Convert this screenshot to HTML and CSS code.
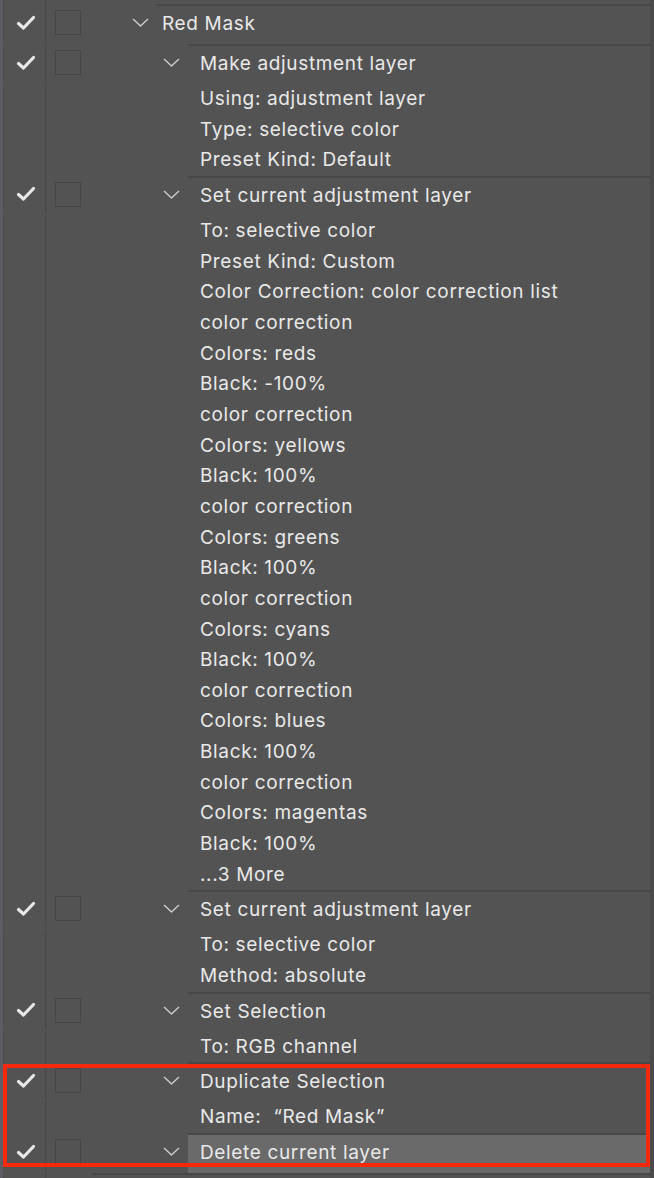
FILE: index.html
```html
<!DOCTYPE html>
<html>
<head>
<meta charset="utf-8">
<link rel="stylesheet" href="styles.css">
</head>
<body>
<div class="panel">
  <div class="row spacer"><div class="gut"></div></div>

  <div class="row head lvl1">
    <div class="gut"><svg class="check" viewBox="0 0 20 16"><polyline points="2.5,8.5 7.5,13 17.5,2.5"/></svg></div>
    <div class="tog"><span class="box"></span></div>
    <div class="twist"><svg class="chev" viewBox="0 0 18 10"><polyline points="1,1.5 9,9 17,1.5"/></svg></div>
    <div class="label">Red Mask</div>
  </div>

  <div class="row head lvl2">
    <div class="gut"><svg class="check" viewBox="0 0 20 16"><polyline points="2.5,8.5 7.5,13 17.5,2.5"/></svg></div>
    <div class="tog"><span class="box"></span></div>
    <div class="twist"><svg class="chev" viewBox="0 0 18 10"><polyline points="1,1.5 9,9 17,1.5"/></svg></div>
    <div class="label">Make adjustment layer</div>
  </div>
  <div class="row detail"><div class="gut"></div><div class="indent"></div><div class="label">Using: adjustment layer</div></div>
  <div class="row detail"><div class="gut"></div><div class="indent"></div><div class="label">Type: selective color</div></div>
  <div class="row detail"><div class="gut"></div><div class="indent"></div><div class="label">Preset Kind: Default</div></div>

  <div class="row head lvl2">
    <div class="gut"><svg class="check" viewBox="0 0 20 16"><polyline points="2.5,8.5 7.5,13 17.5,2.5"/></svg></div>
    <div class="tog"><span class="box"></span></div>
    <div class="twist"><svg class="chev" viewBox="0 0 18 10"><polyline points="1,1.5 9,9 17,1.5"/></svg></div>
    <div class="label">Set current adjustment layer</div>
  </div>
  <div class="row detail"><div class="gut"></div><div class="indent"></div><div class="label">To: selective color</div></div>
  <div class="row detail"><div class="gut"></div><div class="indent"></div><div class="label">Preset Kind: Custom</div></div>
  <div class="row detail"><div class="gut"></div><div class="indent"></div><div class="label">Color Correction: color correction list</div></div>
  <div class="row detail"><div class="gut"></div><div class="indent"></div><div class="label">color correction</div></div>
  <div class="row detail"><div class="gut"></div><div class="indent"></div><div class="label">Colors: reds</div></div>
  <div class="row detail"><div class="gut"></div><div class="indent"></div><div class="label">Black: -100%</div></div>
  <div class="row detail"><div class="gut"></div><div class="indent"></div><div class="label">color correction</div></div>
  <div class="row detail"><div class="gut"></div><div class="indent"></div><div class="label">Colors: yellows</div></div>
  <div class="row detail"><div class="gut"></div><div class="indent"></div><div class="label">Black: 100%</div></div>
  <div class="row detail"><div class="gut"></div><div class="indent"></div><div class="label">color correction</div></div>
  <div class="row detail"><div class="gut"></div><div class="indent"></div><div class="label">Colors: greens</div></div>
  <div class="row detail"><div class="gut"></div><div class="indent"></div><div class="label">Black: 100%</div></div>
  <div class="row detail"><div class="gut"></div><div class="indent"></div><div class="label">color correction</div></div>
  <div class="row detail"><div class="gut"></div><div class="indent"></div><div class="label">Colors: cyans</div></div>
  <div class="row detail"><div class="gut"></div><div class="indent"></div><div class="label">Black: 100%</div></div>
  <div class="row detail"><div class="gut"></div><div class="indent"></div><div class="label">color correction</div></div>
  <div class="row detail"><div class="gut"></div><div class="indent"></div><div class="label">Colors: blues</div></div>
  <div class="row detail"><div class="gut"></div><div class="indent"></div><div class="label">Black: 100%</div></div>
  <div class="row detail"><div class="gut"></div><div class="indent"></div><div class="label">color correction</div></div>
  <div class="row detail"><div class="gut"></div><div class="indent"></div><div class="label">Colors: magentas</div></div>
  <div class="row detail"><div class="gut"></div><div class="indent"></div><div class="label">Black: 100%</div></div>
  <div class="row detail"><div class="gut"></div><div class="indent"></div><div class="label">...3 More</div></div>

  <div class="row head lvl2">
    <div class="gut"><svg class="check" viewBox="0 0 20 16"><polyline points="2.5,8.5 7.5,13 17.5,2.5"/></svg></div>
    <div class="tog"><span class="box"></span></div>
    <div class="twist"><svg class="chev" viewBox="0 0 18 10"><polyline points="1,1.5 9,9 17,1.5"/></svg></div>
    <div class="label">Set current adjustment layer</div>
  </div>
  <div class="row detail"><div class="gut"></div><div class="indent"></div><div class="label">To: selective color</div></div>
  <div class="row detail"><div class="gut"></div><div class="indent"></div><div class="label">Method: absolute</div></div>

  <div class="row head lvl2">
    <div class="gut"><svg class="check" viewBox="0 0 20 16"><polyline points="2.5,8.5 7.5,13 17.5,2.5"/></svg></div>
    <div class="tog"><span class="box"></span></div>
    <div class="twist"><svg class="chev" viewBox="0 0 18 10"><polyline points="1,1.5 9,9 17,1.5"/></svg></div>
    <div class="label">Set Selection</div>
  </div>
  <div class="row detail"><div class="gut"></div><div class="indent"></div><div class="label">To: RGB channel</div></div>

  <div class="row head lvl2">
    <div class="gut"><svg class="check" viewBox="0 0 20 16"><polyline points="2.5,8.5 7.5,13 17.5,2.5"/></svg></div>
    <div class="tog"><span class="box"></span></div>
    <div class="twist"><svg class="chev" viewBox="0 0 18 10"><polyline points="1,1.5 9,9 17,1.5"/></svg></div>
    <div class="label">Duplicate Selection</div>
  </div>
  <div class="row detail"><div class="gut"></div><div class="indent"></div><div class="label">Name:  “Red Mask”</div></div>

  <div class="row head lvl2 selected">
    <div class="gut"><svg class="check" viewBox="0 0 20 16"><polyline points="2.5,8.5 7.5,13 17.5,2.5"/></svg></div>
    <div class="tog"><span class="box"></span></div>
    <div class="twist"><svg class="chev" viewBox="0 0 18 10"><polyline points="1,1.5 9,9 17,1.5"/></svg></div>
    <div class="label">Delete current layer</div>
  </div>

  <div class="row tail"><div class="gut"></div><div class="tail-indent"></div><div class="tail-line"></div></div>

  <div class="annot"></div>
</div>
</body>
</html>
```

FILE: styles.css
```css
html, body {
  margin: 0;
  padding: 0;
  background: #535353;
}

.panel {
  position: relative;
  width: 654px;
  height: 1178px;
  box-sizing: border-box;
  border-left: 3px solid #5e5c65;
  border-right: 4px solid #4a4a4a;
  background: #535353;
  overflow: hidden;
  display: flex;
  flex-direction: column;
  font-family: "Inter", "Noto Sans", sans-serif;
  font-size: 19px;
  letter-spacing: 0.65px;
  color: #e9e9e9;
}

.row {
  display: flex;
  flex: none;
}

.spacer {
  height: 4px;
}

.gut {
  flex: none;
  width: 38px;
  padding-left: 3px;
  border-left: 1px solid #4b4b4b;
  border-right: 1px solid #474747;
  display: flex;
  align-items: center;
  justify-content: center;
}

.check {
  width: 20px;
  height: 16px;
  fill: none;
  stroke: #e8e8e8;
  stroke-width: 3.2;
  stroke-linecap: round;
  stroke-linejoin: round;
}

.head {
  height: 40px;
}

.head .gut {
  height: 37px;
}

.tog {
  flex: none;
  width: 26px;
  height: 37px;
  margin-left: 9px;
  display: flex;
  align-items: center;
}

.box {
  display: block;
  width: 26px;
  height: 25px;
  box-sizing: border-box;
  border: 1.5px solid #464646;
}

.twist {
  flex: none;
  height: 37px;
  display: flex;
  align-items: center;
  justify-content: flex-end;
  box-sizing: border-box;
}

.lvl1 .twist {
  width: 75px;
  padding-right: 7px;
}

.lvl2 .twist {
  width: 107px;
  padding-right: 8px;
}

.chev {
  width: 17px;
  height: 9px;
  fill: none;
  stroke: #cfcfcf;
  stroke-width: 1.5;
  stroke-linecap: round;
  stroke-linejoin: round;
}

.label {
  flex: 1;
  white-space: pre;
}

.head .label {
  border-top: 2px solid #474747;
  line-height: 35px;
}

.lvl1 .label {
  padding-left: 6px;
}

.lvl2 .label {
  padding-left: 12px;
}

.selected .label {
  background: #6a6a6a;
}

.detail {
  height: 30.667px;
}

.indent {
  flex: none;
  width: 142px;
}

.detail .label {
  padding-left: 12px;
  line-height: 30px;
}

.tail {
  flex: 1;
}

.tail-indent {
  flex: none;
  width: 46px;
}

.tail-line {
  flex: 1;
  border-top: 2px solid #474747;
}

.annot {
  position: absolute;
  left: 0;
  top: 1064px;
  width: 647px;
  height: 103px;
  box-sizing: border-box;
  border: 4px solid #f5290c;
}
```
